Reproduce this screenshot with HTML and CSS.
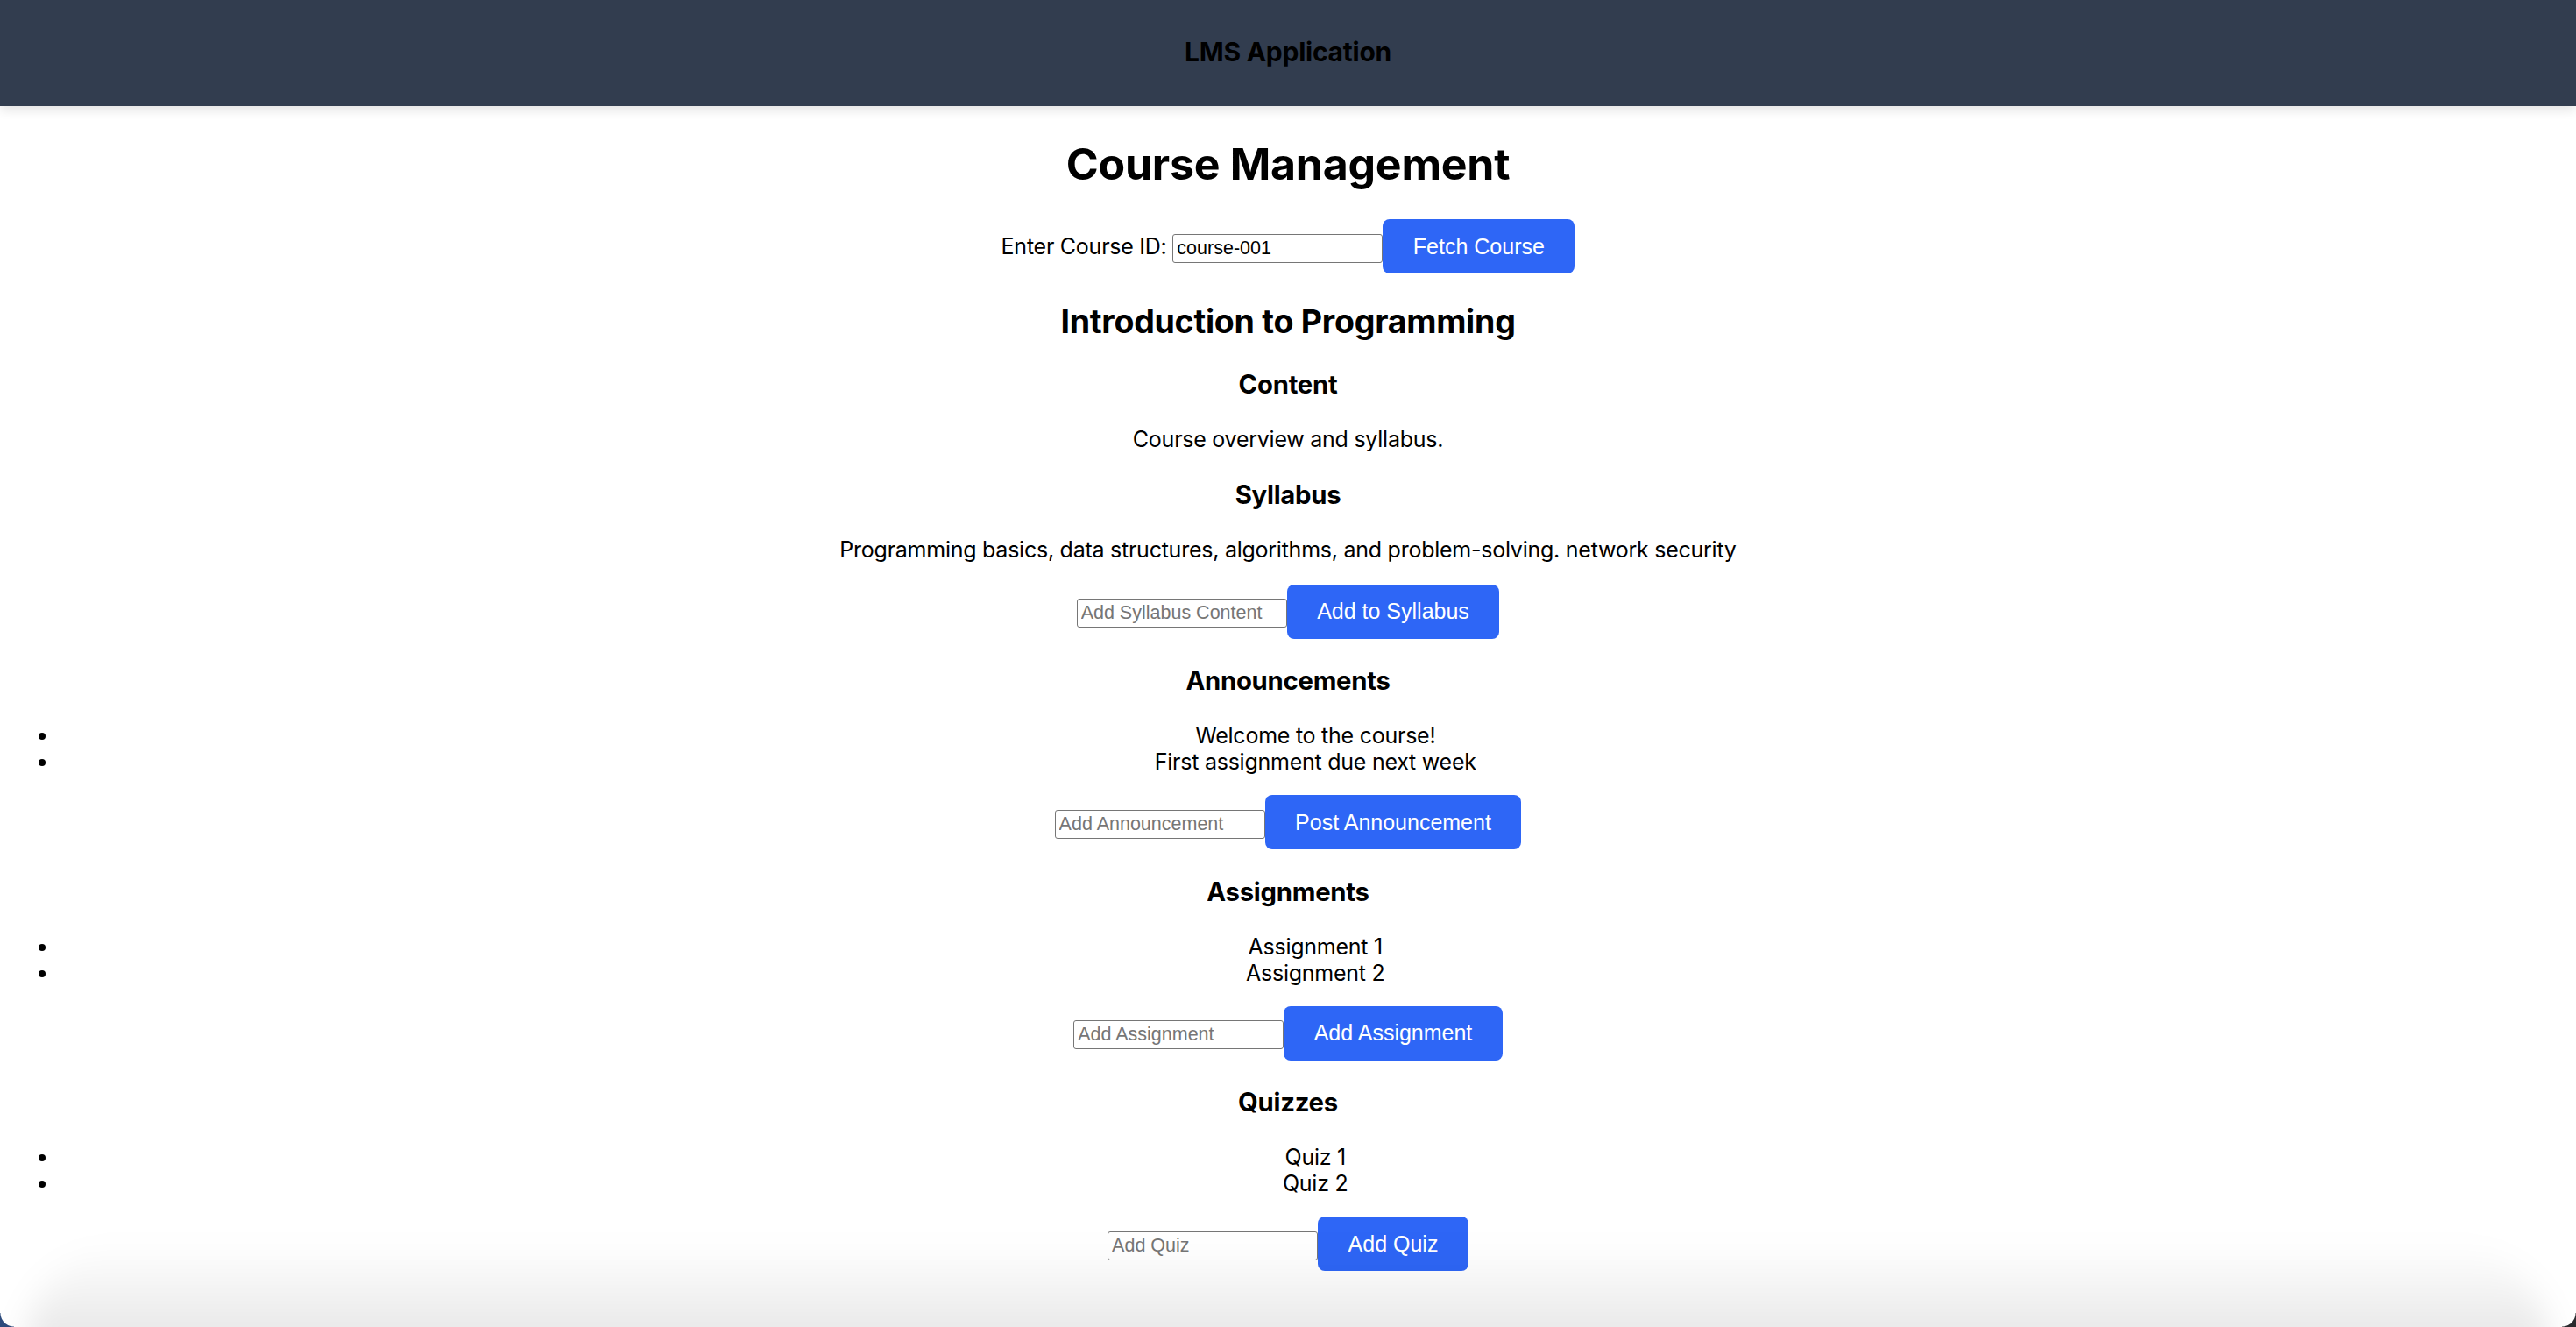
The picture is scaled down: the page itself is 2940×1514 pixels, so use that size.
FILE: index.html
```html
<!DOCTYPE html>
<html lang="en">
<head>
<meta charset="utf-8">
<title>LMS Application</title>
<link rel="stylesheet" href="styles.css">
</head>
<body>
<header class="app-header">
  <span class="app-title">LMS Application</span>
</header>
<main class="page">
  <h1 class="page-title">Course Management</h1>
  <div class="fetch-row">
    <label class="fetch-label" for="cid">Enter Course ID: </label><input id="cid" class="text-input" type="text" value="course-001"><button class="btn">Fetch Course</button>
  </div>

  <section class="course">
    <h2 class="course-title">Introduction to Programming</h2>

    <h3 class="section-title">Content</h3>
    <p class="section-text">Course overview and syllabus.</p>

    <h3 class="section-title">Syllabus</h3>
    <p class="section-text">Programming basics, data structures, algorithms, and problem-solving. network security</p>
    <div class="add-row"><input class="text-input" type="text" placeholder="Add Syllabus Content"><button class="btn">Add to Syllabus</button></div>

    <h3 class="section-title">Announcements</h3>
    <ul class="item-list">
      <li>Welcome to the course!</li>
      <li>First assignment due next week</li>
    </ul>
    <div class="add-row"><input class="text-input" type="text" placeholder="Add Announcement"><button class="btn">Post Announcement</button></div>

    <h3 class="section-title">Assignments</h3>
    <ul class="item-list">
      <li>Assignment 1</li>
      <li>Assignment 2</li>
    </ul>
    <div class="add-row"><input class="text-input" type="text" placeholder="Add Assignment"><button class="btn">Add Assignment</button></div>

    <h3 class="section-title">Quizzes</h3>
    <ul class="item-list">
      <li>Quiz 1</li>
      <li>Quiz 2</li>
    </ul>
    <div class="add-row"><input class="text-input" type="text" placeholder="Add Quiz"><button class="btn">Add Quiz</button></div>
  </section>
</main>
<div class="window-shade"></div>
<div class="corner corner-left"></div>
<div class="corner corner-right"></div>
</body>
</html>
```

FILE: styles.css
```css
html, body {
  margin: 0;
  padding: 0;
  background: #ffffff;
}

body {
  font-family: Inter, "Noto Sans", "Liberation Sans", sans-serif;
  font-size: 25px;
  letter-spacing: -0.01em;
  color: #000000;
  overflow: hidden;
}

.app-header {
  height: 121px;
  background: #323d4f;
  display: flex;
  align-items: center;
  justify-content: center;
  box-shadow: 0 4px 12px rgba(0, 0, 0, 0.12);
  position: relative;
  z-index: 1;
}

.app-title {
  font-weight: 700;
  font-size: 30px;
  color: #000000;
  margin-top: -4px;
}

.page {
  text-align: center;
}

.page-title {
  font-size: 50px;
  font-weight: 700;
  margin: 36px 0 33px;
}

.fetch-row,
.add-row {
  text-align: center;
  letter-spacing: normal;
}

.fetch-label {
  letter-spacing: -0.01em;
}

.add-row {
  margin-bottom: 3px;
}

.text-input {
  font-family: "Liberation Sans", Arial, sans-serif;
  font-size: 21.5px;
  width: 240px;
  height: 33px;
  box-sizing: border-box;
  padding: 2px 4px;
  border: 1.5px solid #767676;
  border-radius: 3px;
  color: #000000;
  background: #ffffff;
  vertical-align: baseline;
}

.text-input::placeholder {
  color: #767676;
}

.btn {
  font-family: "Liberation Sans", Arial, sans-serif;
  font-size: 25px;
  color: #ffffff;
  background: #2e66f6;
  border: none;
  border-radius: 8px;
  padding: 16.5px 34.5px;
  line-height: 29px;
  cursor: pointer;
}

.course-title {
  font-size: 37.5px;
  font-weight: 700;
  margin: 32px 0 32px;
}

.section-title {
  font-size: 29.25px;
  font-weight: 700;
  margin: 30.25px 0;
}

.section-text {
  margin: 25px 0;
}

.item-list {
  margin: 25px 0 23px;
  padding-left: 66.5px;
  padding-right: 4px;
  line-height: 30px;
}

.window-shade {
  position: fixed;
  left: 30px;
  right: 30px;
  bottom: -30px;
  height: 125px;
  border-radius: 120px 120px 0 0;
  background: linear-gradient(to bottom, rgba(0, 0, 0, 0), rgba(0, 0, 0, 0.11));
  filter: blur(18px);
  pointer-events: none;
}

.corner {
  position: fixed;
  bottom: 0;
  width: 16px;
  height: 16px;
  pointer-events: none;
}

.corner-left {
  left: 0;
  background: radial-gradient(circle at 100% 0, transparent 15px, #2c4a7c 16px);
}

.corner-right {
  right: 0;
  background: radial-gradient(circle at 0 0, transparent 15px, #2a2a2e 16px);
}
```
